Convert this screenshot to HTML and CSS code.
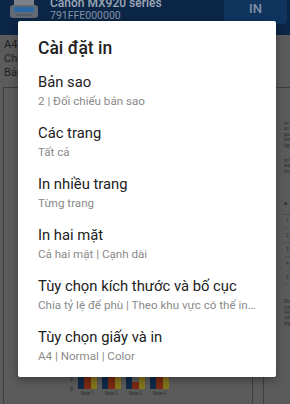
FILE: index.html
```html
<!DOCTYPE html>
<html lang="vi">
<head>
<meta charset="utf-8">
<title>Cài đặt in</title>
<link rel="stylesheet" href="styles.css">
</head>
<body>
<div class="app">
  <header class="topbar">
    <svg class="printer-icon" width="28" height="20" viewBox="0 0 28 20" aria-hidden="true">
      <rect x="4" y="0" width="20" height="7" fill="#7b8089"/>
      <rect x="0" y="5" width="28" height="13" rx="3" fill="#646a73"/>
      <rect x="4" y="7" width="20" height="5" fill="#2a68a8"/>
      <rect x="6" y="14" width="16" height="2" rx="1" fill="#575c64"/>
    </svg>
    <div class="printer-info">
      <div class="printer-name">Canon MX920 series</div>
      <div class="printer-id">791FFE000000</div>
    </div>
    <button class="print-btn">IN</button>
  </header>

  <section class="summary">
    <div>A4</div>
    <div>Chiều dọc</div>
    <div>Bản sao: 2</div>
  </section>

  <section class="previews">
    <div class="page page-main">
      <div class="chart">
        <div class="axis"><span>2</span><span>0</span></div>
        <div class="group"><i class="bar navy" style="height:28px"></i><i class="bar red" style="height:26px"></i><i class="bar gold" style="height:24px"></i></div>
        <div class="group"><i class="bar navy" style="height:26px"></i><i class="bar red" style="height:28px"></i><i class="bar gold" style="height:25px"></i></div>
        <div class="group"><i class="bar navy" style="height:27px"></i><i class="bar red" style="height:7px"></i><i class="bar gold" style="height:26px"></i></div>
        <div class="group"><i class="bar navy" style="height:25px"></i><i class="bar red" style="height:28px"></i><i class="bar gold" style="height:24px"></i></div>
        <span class="axis-gap"></span>
        <span class="row-label">Row 1</span>
        <span class="row-label">Row 2</span>
        <span class="row-label">Row 3</span>
        <span class="row-label">Row 4</span>
      </div>
    </div>
    <div class="page page-next">
      <p class="tiny">In vel ante dapibus, euismod nulla sed, lacinia est. Vivamus et mauris in dolor tincidunt tristique. Curabitur ac ipsum vel justo laoreet accumsan. Nunc luctus lacus sed magna lacinia ultrices. Donec eleifend orci quis libero tristique, at elementum justo laoreet. Morbi non lacus id velit ultricies placerat. Integer vitae lorem laoreet, ullamcorper nibh nec, venenatis ante. Praesent ut massa non odio ultricies faucibus et at ligula. Aliquam ultrices urna a erat ullamcorper.</p>
      <p class="tiny">In hac habitasse platea dictumst. Vestibulum quis sem vel nibh ultrices iaculis. Vivamus vehicula ligula in augue volutpat, et commodo mauris fermentum. Maecenas malesuada, risus sed volutpat porta, nulla elit tincidunt mi, nec malesuada erat nibh vel arcu.</p>
      <p class="tiny-head">a. Lorem ipsum dolor sit amet</p>
      <div class="tiny-table">
        <div class="tr">1</div>
        <div class="tr">2</div>
        <div class="tr">3</div>
        <div class="tr">4</div>
        <div class="tr">5</div>
      </div>
      <p class="tiny">Etiam tempor sodales lorem, eu aliquam sapien commodo in. Maecenas porttitor pellentesque dolor, nec convallis sapien consectetur ac. Sed sollicitudin ipsum sed magna fermentum, eget varius lectus ultrices. Pellentesque habitant morbi tristique senectus et netus et malesuada fames ac turpis egestas. Praesent congue orci in metus pretium, at posuere nisl tincidunt. Integer lacinia, ex nec tempor lobortis, turpis dui dignissim quam, sed semper nulla justo vitae augue. Aliquam erat volutpat sed iaculis.</p>
    </div>
  </section>
</div>

<div class="dialog" role="dialog" aria-labelledby="dlg-title">
  <h2 class="dialog-title" id="dlg-title">Cài đặt in</h2>
  <ul class="options">
    <li class="option">
      <div class="option-title">Bản sao</div>
      <div class="option-sub">2 | Đối chiếu bản sao</div>
    </li>
    <li class="option">
      <div class="option-title">Các trang</div>
      <div class="option-sub">Tất cả</div>
    </li>
    <li class="option">
      <div class="option-title">In nhiều trang</div>
      <div class="option-sub">Từng trang</div>
    </li>
    <li class="option">
      <div class="option-title">In hai mặt</div>
      <div class="option-sub">Cả hai mặt | Cạnh dài</div>
    </li>
    <li class="option">
      <div class="option-title">Tùy chọn kích thước và bố cục</div>
      <div class="option-sub">Chia tỷ lệ để phù | Theo khu vực có thể in được</div>
    </li>
    <li class="option">
      <div class="option-title">Tùy chọn giấy và in</div>
      <div class="option-sub">A4 | Normal | Color</div>
    </li>
  </ul>
</div>
</body>
</html>
```

FILE: styles.css
```css
* { box-sizing: border-box; }

html, body {
  margin: 0;
  padding: 0;
}

body {
  width: 290px;
  height: 404px;
  overflow: hidden;
  position: relative;
  background: #5b5b5b;
  font-family: Roboto, "Noto Sans", "Liberation Sans", sans-serif;
}

.app {
  display: flex;
  flex-direction: column;
  height: 404px;
}

/* ---------- top bar ---------- */
.topbar {
  flex: 0 0 35px;
  display: flex;
  align-items: flex-start;
  background: #0b2646;
}

.printer-icon {
  flex: none;
  margin-left: 10px;
  display: block;
}

.printer-info {
  margin-left: 12px;
  margin-top: -4px;
  display: flex;
  flex-direction: column;
}

.printer-name {
  font-size: 12px;
  font-weight: 500;
  line-height: 14px;
  color: #9ea8b7;
  white-space: nowrap;
}

.printer-id {
  font-size: 10.5px;
  line-height: 12px;
  color: #8793a6;
  white-space: nowrap;
}

.print-btn {
  margin-left: auto;
  margin-right: 3px;
  width: 63px;
  height: 24px;
  padding: 0 0 6px;
  border: 0;
  border-radius: 0 0 4px 4px;
  background: #0f355f;
  color: #8592a6;
  font-family: inherit;
  font-size: 13px;
  font-weight: 500;
  line-height: 18px;
}

/* ---------- summary ---------- */
.summary {
  flex: none;
  padding: 3px 4px 7px;
  font-size: 11px;
  line-height: 14px;
  color: #1f1f1f;
  white-space: nowrap;
}

/* ---------- previews ---------- */
.previews {
  flex: 1;
  min-height: 0;
  display: flex;
  gap: 10px;
  padding-left: 3px;
}

.page {
  flex: none;
  border: 1px solid #3e3e3e;
  border-bottom: 0;
  overflow: hidden;
}

.page-main {
  width: 250px;
  display: flex;
  flex-direction: column;
  justify-content: flex-end;
  padding-bottom: 7px;
}

.chart {
  display: grid;
  grid-template-columns: 3px repeat(4, 19px);
  grid-template-rows: 30px 6px;
  column-gap: 5px;
  row-gap: 2px;
  margin-left: 66px;
}

.axis {
  align-self: end;
  display: flex;
  flex-direction: column;
  margin-bottom: -5px;
  font-size: 5px;
  line-height: 10px;
  color: #262626;
}

.group {
  display: flex;
  align-items: flex-end;
}

.bar {
  flex: 1;
  display: block;
}

.navy { background: #0f2a4a; }
.red { background: #7d2a13; }
.gold { background: #86751d; }

.row-label {
  font-size: 4.5px;
  line-height: 6px;
  text-align: center;
  color: #2a2a2a;
  white-space: nowrap;
}

.page-next {
  width: 250px;
  padding: 33px 10px 0 20px;
  color: #2b2b2b;
}

.tiny {
  margin: 0 0 10px;
  font-size: 4.6px;
  line-height: 5.4px;
}

.tiny-head {
  margin: 26px 0 8px;
  font-size: 5.5px;
  font-weight: 700;
  line-height: 6px;
}

.tiny-table {
  margin-bottom: 14px;
  border-top: 1px solid #4b4b4b;
}

.tr {
  height: 14px;
  padding: 4px 0 0 2px;
  font-size: 4.6px;
  line-height: 6px;
  border-bottom: 1px solid #4e4e4e;
}

/* ---------- dialog ---------- */
.dialog {
  position: absolute;
  left: 18px;
  top: 21px;
  width: 258px;
  height: 356px;
  background: #ffffff;
  border-radius: 2px;
  box-shadow: 0 3px 10px rgba(0, 0, 0, 0.35);
  padding-bottom: 6px;
}

.dialog-title {
  margin: 0;
  padding: 17px 20px 7px;
  font-size: 17.5px;
  font-weight: 500;
  line-height: 20px;
  color: #212121;
}

.options {
  list-style: none;
  margin: 0;
  padding: 0;
}

.option {
  padding: 7px 20px;
  height: 51px;
}

.option-title {
  font-size: 14.8px;
  line-height: 20px;
  color: #212121;
  white-space: nowrap;
}

.option-sub {
  margin-top: 1px;
  font-size: 11.6px;
  line-height: 16px;
  color: #8a8a8a;
  white-space: nowrap;
  overflow: hidden;
  text-overflow: ellipsis;
}
```
